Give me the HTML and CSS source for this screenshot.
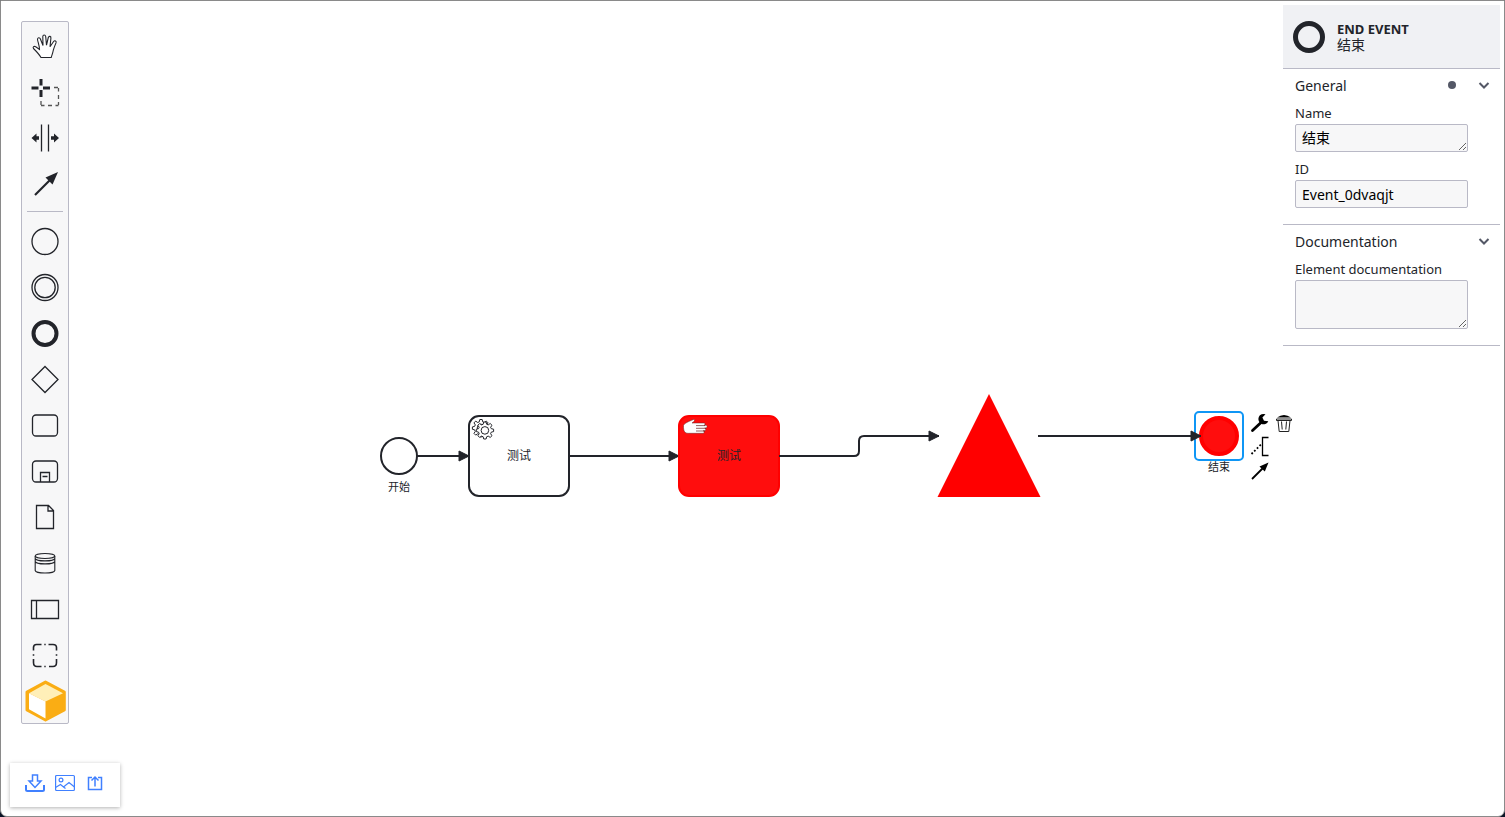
FILE: index.html
```html
<!DOCTYPE html>
<html lang="en">
<head>
<meta charset="utf-8">
<title>BPMN Editor</title>
<link rel="stylesheet" href="styles.css">
</head>
<body>
<div class="editor">
  <main class="canvas">
    <svg class="diagram" role="img" aria-label="Process diagram">
      <defs>
        <marker id="arrow" viewBox="0 0 20 20" refX="11" refY="10" markerWidth="10" markerHeight="10" markerUnits="strokeWidth" orient="auto">
          <path class="arrow-head" d="M1 5L11 10L1 15Z"/>
        </marker>
      </defs>
      <g transform="translate(-1 -1)">
        <g class="flow">
          <path d="M417 456H469" marker-end="url(#arrow)"/>
          <path d="M569 456H679" marker-end="url(#arrow)"/>
        </g>

        <circle class="shape" cx="399" cy="456" r="18"/>
        <text class="label-small" x="399" y="491">开始</text>

        <rect class="shape" x="469" y="416" width="100" height="80" rx="10"/>
        <g class="gears">
          <path d="M479.8 419.500h2.400l.5 2.300 1.600.7 2-1.400 1.800 1.800-1.400 2 .7 1.500 2.300.5v2.400l-2.300.5-.7 1.600 1.400 2-1.800 1.700-2-1.300-1.600.7-.5 2.300h-2.400l-.5-2.300-1.600-.7-2 1.300-1.700-1.700 1.300-2-.7-1.600-2.200-.5v-2.400l2.200-.5.7-1.500-1.300-2 1.700-1.800 2 1.400 1.600-.7z"/>
          <circle cx="481" cy="428" r="3.800"/>
          <path fill="#fff" d="M483.700 422h2.400l.5 2.200 1.600.7 2-1.400 1.800 1.800-1.400 2 .7 1.400 2.300.5v2.400l-2.300.5-.7 1.600 1.400 2-1.800 1.700-2-1.300-1.600.7-.5 2.200h-2.400l-.5-2.200-1.600-.7-2 1.300-1.700-1.700 1.300-2-.7-1.600-2.200-.5v-2.400l2.200-.5.7-1.400-1.300-2 1.700-1.800 2 1.400 1.600-.7z"/>
          <circle cx="484.900" cy="430.400" r="3.800"/>
        </g>
        <text class="label" x="519" y="460">测试</text>

        <rect class="task-red" x="679" y="416" width="100" height="80" rx="10"/>
        <path d="M683.500 425.500c.5-2 5-4 10-6 2 0 1 2-1.500 3.500h12c1.500 0 1.500 2.300 0 2.300h2c1.500 0 1.500 2.700 0 2.700h-1.200c1.300 0 1.300 2.700 0 2.700h-1.500c1.200 0 1.200 2.600 0 2.600h-15c-3.500 0-5-2-4.800-7.800z" fill="#fff" stroke="#632020" stroke-width=".5"/>
        <path d="M696 425.600h9M696 428.300h10M696 431h9" stroke="#632020" stroke-width=".7"/>
        <text class="label" x="729" y="460">测试</text>

        <path class="triangle" d="M989 394L1040.500 497H937.500Z"/>

        <g class="flow">
          <path d="M779 456H854Q859 456 859 451V441Q859 436 864 436H939" marker-end="url(#arrow)"/>
        </g>

        <circle class="end-red" cx="1219" cy="436" r="18"/>
        <rect class="selection" x="1195" y="412" width="48" height="48" rx="4"/>
        <text class="label-small" x="1219" y="471">结束</text>
        <g class="flow">
          <path d="M1038 436H1201" marker-end="url(#arrow)"/>
        </g>
      </g>
    </svg>

    <div class="context-pad">
      <button type="button" aria-label="Change element"><svg viewBox="0 0 22 22"><path d="M3.500 18.500L11.500 11" stroke="#000" stroke-width="2.800" stroke-linecap="round"/><path d="M16.500 2.300A5.200 5.200 0 1 0 19.300 9.300L15 8.800 13.400 5.500Z" fill="#000"/></svg></button>
      <button type="button" aria-label="Delete"><svg viewBox="0 0 22 22"><path d="M4 5.500Q11 .5 18 5.500Z" fill="#000"/><path d="M3.500 7H18.500V8.500H3.500ZM5 8.500L6.200 19.500H15.800L17 8.500M8.500 9.500L9.200 17.500M13.500 9.500L12.800 17.500" fill="none" stroke="#222"/></svg></button>
      <button type="button" aria-label="Add text annotation"><svg viewBox="0 0 22 22"><path d="M19.500 1.500H13.500V19.500H19.500" fill="none" stroke="#000" stroke-width="1.300"/><path d="M2.500 18L12 8.500" fill="none" stroke="#000" stroke-width="1.800" stroke-dasharray="1.800 2"/></svg></button>
      <button type="button" class="connect" aria-label="Connect"><svg viewBox="0 0 22 22"><path d="M3 19L15 7" stroke="#000" stroke-width="1.800"/><path d="M19.500 2.500L10.500 6.500 15.800 11.500Z" fill="#000"/></svg></button>
    </div>

    <nav class="palette" aria-label="Elements">
      <button type="button" aria-label="Hand tool"><svg viewBox="0 0 46 46"><path d="M19 35.500C17 32 14.500 29.500 11.500 26.500 10.500 25 12 23.700 13.700 24.700L17.500 27.500C17.500 24 16 20.500 15.500 17.500 15.500 15.500 17.700 15.200 18.400 17L21 23.500 20.800 14.500C21 12.500 23.300 12.500 23.700 14.500L24.500 23.200 26.300 15.500C27 13.600 29.200 14.200 28.900 16.200L28 24.700 31.600 19.500C32.800 18 34.700 19 34 20.900 32.700 24 31.500 27 31 29.500 30.500 32 29.700 33.500 29.200 35.500Z" fill="#fff" stroke-width="1.100"/></svg></button>
      <button type="button" aria-label="Lasso tool"><svg viewBox="0 0 46 46"><path d="M9.500 20H16.500M21 20H28M19 11V17.500M19 22V29" stroke-width="3"/><path d="M32 19.500H36M36.500 20V23.500M36.500 27V31M36.500 34V37M19 33V37M19 37.500H22.500M26 37.500H30M33.500 37.500H36.500" stroke="#555"/></svg></button>
      <button type="button" aria-label="Create or remove space"><svg viewBox="0 0 46 46"><path d="M19.500 10.500V37.500M26.500 10.500V37.500"/><path class="solid" d="M9.500 24L14.500 19.500V22.300H17V25.700H14.500V28.500ZM37 24L32 19.500V22.300H29V25.700H32V28.500Z"/></svg></button>
      <button type="button" aria-label="Connect elements"><svg viewBox="0 0 46 46"><path d="M13 35L29 19" stroke-width="2.200"/><path class="solid" d="M36 12L23.500 17.500 30.500 24.500Z"/></svg></button>
      <hr>
      <button type="button" aria-label="Start event"><svg viewBox="0 0 46 46"><circle cx="23" cy="24.500" r="13"/></svg></button>
      <button type="button" aria-label="Intermediate event"><svg viewBox="0 0 46 46"><circle cx="23" cy="24.500" r="13"/><circle cx="23" cy="24.500" r="10.200"/></svg></button>
      <button type="button" aria-label="End event"><svg viewBox="0 0 46 46"><circle cx="23" cy="24.500" r="11.500" stroke-width="4"/></svg></button>
      <button type="button" aria-label="Gateway"><svg viewBox="0 0 46 46"><path d="M23 11.500L36 24.500 23 37.500 10 24.500Z"/></svg></button>
      <button type="button" aria-label="Task"><svg viewBox="0 0 46 46"><rect x="10.500" y="14" width="25" height="21" rx="3.500"/></svg></button>
      <button type="button" aria-label="Sub-process"><svg viewBox="0 0 46 46"><rect x="10.500" y="14" width="25" height="21" rx="3.500"/><path d="M18.500 35V25.500H27.500V35M20.500 29.500H25.500"/></svg></button>
      <button type="button" aria-label="Data object"><svg viewBox="0 0 46 46"><path d="M14.500 12.500H26.500L31.500 17.500V35.500H14.500ZM26 12.500V18H31.500"/></svg></button>
      <button type="button" aria-label="Data store"><svg viewBox="0 0 46 46"><g stroke-width="1.100"><ellipse cx="23" cy="17" rx="9.800" ry="2.500"/><path d="M13.200 17V31.500C14 34.800 32 34.800 32.800 31.500V17M13.200 19.500C14 22.700 32 22.700 32.800 19.500M13.200 22.500C14 25.700 32 25.700 32.800 22.500"/></g></svg></button>
      <button type="button" aria-label="Pool"><svg viewBox="0 0 46 46"><path d="M9.500 15.500H36.500V33.500H9.500ZM14.500 15.500V33.500"/></svg></button>
      <button type="button" aria-label="Group"><svg viewBox="0 0 46 46"><path d="M11.500 19.500V16.500Q11.500 13.500 14.500 13.500H19.500M26.500 13.500H31Q34.500 13.500 34.500 16.500V19.500M34.500 28V31.500Q34.500 35.500 31 35.500H27M19.500 35.500H15Q11.500 35.500 11.500 31.500V28M22.300 13.500H23.700M22.300 35.500H23.700M11.500 23.300V24.700M34.500 23.300V24.700" stroke-width="1.600"/></svg></button>
      <button type="button" aria-label="Custom element"><svg viewBox="0 0 46 46"><path d="M23.500 5L42.300 15V33L23.500 43 5 33V15Z" fill="#faad14" stroke="#faad14" stroke-width="3" stroke-linejoin="round"/><path d="M23.500 7L41 16.200 23.500 24.500 7 16.200Z" fill="#ffefb8" stroke="none"/><path d="M7 16.200L23.500 24.500V41.500L7 32.200Z" fill="#fff" stroke="none"/></svg></button>
    </nav>

    <div class="toolbar">
      <button type="button" aria-label="Download"><svg viewBox="0 0 20 20"><path d="M7.500 2H12.500V8H16L10 14.500 4 8H7.500Z" stroke-width="1.500"/><path d="M1 12V16.500Q1 18 2.500 18H17.500Q19 18 19 16.500V12" stroke-width="2"/></svg></button>
      <button type="button" aria-label="Export image"><svg viewBox="0 0 20 20"><g stroke-width="1.200"><rect x=".6" y="2.500" width="18.800" height="15" rx="1"/><circle cx="6" cy="7" r="1.900"/><path d="M.5 14.500L5.500 11.500 8.500 14 14 9.500 19.500 14M8.500 14L10.500 15.500"/></g></svg></button>
      <button type="button" aria-label="Export file"><svg viewBox="0 0 20 20"><path d="M7 4.500H3.500V16.500H16.500V4.500H13M10 13.500V4M6.500 7.500L10 4 13.500 7.500" stroke-width="1.500"/></svg></button>
    </div>
  </main>

  <aside class="properties">
    <header class="element-header">
      <svg class="element-icon" viewBox="0 0 32 32" aria-hidden="true"><circle cx="16" cy="16" r="13.500" fill="none" stroke="#22242a" stroke-width="5"/></svg>
      <div class="element-title">
        <h1>END EVENT</h1>
        <p>结束</p>
      </div>
    </header>
    <section class="group">
      <button type="button" class="group-header"><span>General</span><i class="dot"></i><svg class="chevron" viewBox="0 0 12 12" aria-hidden="true"><path d="M1.500 4L6 8.500 10.500 4"/></svg></button>
      <div class="field">
        <label for="name">Name</label>
        <textarea id="name" rows="1">结束</textarea>
      </div>
      <div class="field">
        <label for="element-id">ID</label>
        <input id="element-id" type="text" value="Event_0dvaqjt" spellcheck="false">
      </div>
    </section>
    <section class="group">
      <button type="button" class="group-header"><span>Documentation</span><svg class="chevron" viewBox="0 0 12 12" aria-hidden="true"><path d="M1.500 4L6 8.500 10.500 4"/></svg></button>
      <div class="field">
        <label for="docs">Element documentation</label>
        <textarea id="docs" class="tall" rows="2"></textarea>
      </div>
    </section>
  </aside>
</div>
</body>
</html>
```
FILE: styles.css
```css
* { box-sizing: border-box; }

body {
  margin: 0;
  background: #0b1426;
  font-family: "Noto Sans", "Noto Sans CJK SC", sans-serif;
  color: #22242a;
}

button {
  padding: 0;
  border: 0;
  background: none;
  color: inherit;
  font: inherit;
  cursor: pointer;
}

button svg { display: block; }

.editor {
  display: flex;
  height: 100vh;
  padding: 0 4px 0 0;
  border: 1px solid #8a8a8a;
  border-radius: 0 0 7px 7px;
  background: #fff;
}

.canvas {
  position: relative;
  flex: 1;
  min-width: 0;
}

.diagram {
  display: block;
  width: 100%;
  height: 100%;
}

.flow path {
  fill: none;
  stroke: #22242a;
  stroke-width: 2;
}

.arrow-head {
  fill: #22242a;
  stroke: #22242a;
  stroke-width: 1;
}

.shape {
  fill: #fff;
  stroke: #22242a;
  stroke-width: 2;
}

.task-red, .end-red {
  fill: #ff0d0d;
  stroke: #f00;
  stroke-width: 2;
}

.end-red { stroke-width: 4; }
.triangle { fill: #f00; }

.selection {
  fill: none;
  stroke: #0f96f5;
  stroke-width: 2;
}

.gears {
  fill: none;
  stroke: #22242a;
  stroke-width: 1;
}

.label, .label-small {
  fill: #22242a;
  font-size: 12px;
  font-family: "Noto Sans CJK SC", sans-serif;
  text-anchor: middle;
}

.label-small { font-size: 11px; }

.context-pad {
  position: absolute;
  z-index: 2;
  left: 1248px;
  top: 411px;
  display: grid;
  grid-template-columns: repeat(2, 22px);
  grid-auto-rows: 22px;
  column-gap: 2px;
  row-gap: 2px;
}

.connect { grid-column: 1; }

.palette {
  position: absolute;
  left: 20px;
  top: 20px;
  display: flex;
  flex-direction: column;
  border: 1px solid #b9b9c6;
  border-radius: 2px;
  background: #f7f7f8;
}

.palette svg {
  width: 46px;
  height: 46px;
  fill: none;
  stroke: #22242a;
  stroke-width: 1.3;
}

.palette .solid {
  fill: #22242a;
  stroke: none;
}

.palette hr {
  width: 36px;
  margin: 5px auto;
  border: 0;
  border-top: 1px solid #b9b9c6;
}

.toolbar {
  position: absolute;
  left: 9px;
  bottom: 9px;
  display: flex;
  gap: 10px;
  padding: 10px 15px 14px;
  background: #fff;
  box-shadow: 0 1px 4px rgba(0, 0, 0, .3);
}

.toolbar svg {
  width: 20px;
  height: 20px;
  fill: none;
  stroke: #4080ff;
}

.properties {
  width: 217px;
  padding-top: 4px;
}

.element-header {
  display: flex;
  align-items: center;
  gap: 12px;
  height: 64px;
  padding: 0 10px;
  border-bottom: 1px solid #b9b9c6;
  background: #f0f1f4;
}

.element-icon {
  width: 32px;
  height: 32px;
}

.element-title h1, .element-title p {
  margin: 0;
  font-size: 13px;
  line-height: 16px;
}

.element-title p { font-size: 14px; }

.group {
  padding-bottom: 16px;
  border-bottom: 1px solid #b9b9c6;
}

.group-header {
  display: flex;
  align-items: center;
  gap: 22px;
  width: 100%;
  height: 32px;
  padding: 0 10px 0 12px;
  font-size: 14px;
  text-align: left;
}

.group-header span { flex: 1; }

.dot {
  width: 8px;
  height: 8px;
  border-radius: 50%;
  background: #545866;
}

.chevron {
  width: 12px;
  height: 12px;
  fill: none;
  stroke: #545866;
  stroke-width: 2;
}

.field {
  display: flex;
  flex-direction: column;
  gap: 2px;
  padding: 3px 32px 0 12px;
}

.field + .field { padding-top: 8px; }

.field label {
  font-size: 13px;
  line-height: 18px;
}

.field input, .field textarea {
  display: block;
  width: 100%;
  height: 28px;
  margin: 0;
  padding: 3px 6px;
  border: 1px solid #b9b9c6;
  border-radius: 2px;
  background: #f7f7f8;
  color: #000;
  font: 14px/20px "Noto Sans", "Noto Sans CJK SC", sans-serif;
}

.field textarea {
  overflow: hidden;
  resize: vertical;
}

.field .tall { height: 49px; }
```
